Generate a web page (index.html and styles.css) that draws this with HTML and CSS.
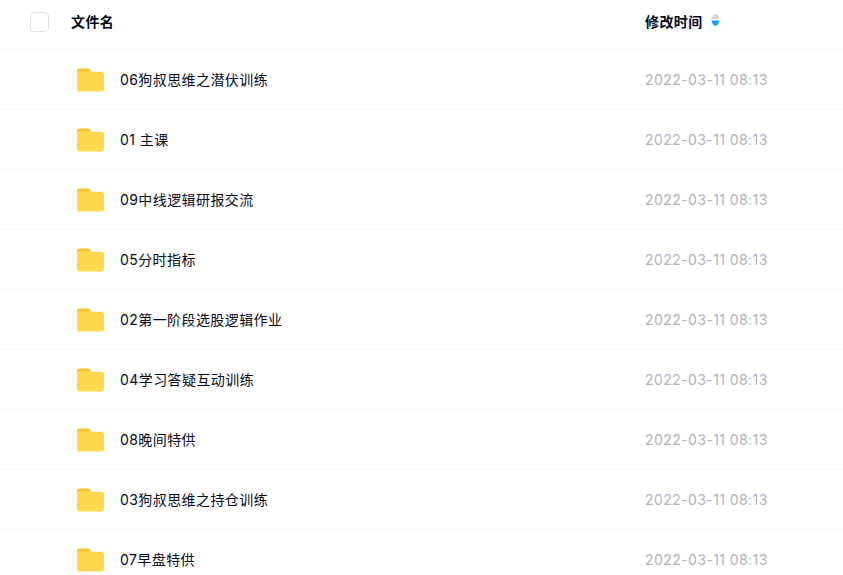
FILE: index.html
```html
<!DOCTYPE html>
<html lang="zh-CN">
<head>
    <meta charset="UTF-8">
    <title>文件列表</title>
    <link rel="stylesheet" href="styles.css">
</head>
<body>
    <svg class="defs" width="0" height="0">
        <symbol id="folder" viewBox="0 0 28 24">
            <path d="M3 0h7.500c1.500 0 2.500.6 3.500 1.600L15 3.500H3.500L0 5V3C0 1.200 1.200 0 3 0z" fill="#ffc12b"/>
            <path d="M3 3.500h22c1.800 0 3 1.200 3 3V21c0 1.800-1.200 3-3 3H3c-1.800 0-3-1.200-3-3V3.800C0 5 1.200 3.500 3 3.500z" fill="#ffd84d"/>
        </symbol>
    </svg>
    <div class="file-list">
        <div class="row head">
            <div class="check-col"><span class="checkbox"></span></div>
            <div class="name-col">文件名</div>
            <div class="time-col">修改时间
                <svg class="sort" width="9" height="14" viewBox="0 0 10 14">
                    <path d="M5 0C6.600 0 8.700 2.800 9.600 6H.4C1.300 2.800 3.400 0 5 0z" fill="#d4d7de"/>
                    <path d="M.4 7.500h9.200C8.700 11 6.600 13.500 5 13.500S1.300 11 .4 7.500z" fill="#06a7ff"/>
                </svg>
            </div>
        </div>
        <div class="row"><div class="check-col"></div><div class="name-col"><svg class="folder"><use href="#folder"/></svg><span class="name">06狗叔思维之潜伏训练</span></div><div class="time-col"><span class="time">2022-03-11 08:13</span></div></div>
        <div class="row"><div class="check-col"></div><div class="name-col"><svg class="folder"><use href="#folder"/></svg><span class="name">01 主课</span></div><div class="time-col"><span class="time">2022-03-11 08:13</span></div></div>
        <div class="row"><div class="check-col"></div><div class="name-col"><svg class="folder"><use href="#folder"/></svg><span class="name">09中线逻辑研报交流</span></div><div class="time-col"><span class="time">2022-03-11 08:13</span></div></div>
        <div class="row"><div class="check-col"></div><div class="name-col"><svg class="folder"><use href="#folder"/></svg><span class="name">05分时指标</span></div><div class="time-col"><span class="time">2022-03-11 08:13</span></div></div>
        <div class="row"><div class="check-col"></div><div class="name-col"><svg class="folder"><use href="#folder"/></svg><span class="name">02第一阶段选股逻辑作业</span></div><div class="time-col"><span class="time">2022-03-11 08:13</span></div></div>
        <div class="row"><div class="check-col"></div><div class="name-col"><svg class="folder"><use href="#folder"/></svg><span class="name">04学习答疑互动训练</span></div><div class="time-col"><span class="time">2022-03-11 08:13</span></div></div>
        <div class="row"><div class="check-col"></div><div class="name-col"><svg class="folder"><use href="#folder"/></svg><span class="name">08晚间特供</span></div><div class="time-col"><span class="time">2022-03-11 08:13</span></div></div>
        <div class="row"><div class="check-col"></div><div class="name-col"><svg class="folder"><use href="#folder"/></svg><span class="name">03狗叔思维之持仓训练</span></div><div class="time-col"><span class="time">2022-03-11 08:13</span></div></div>
        <div class="row"><div class="check-col"></div><div class="name-col"><svg class="folder"><use href="#folder"/></svg><span class="name">07早盘特供</span></div><div class="time-col"><span class="time">2022-03-11 08:13</span></div></div>
    </div>
</body>
</html>
```

FILE: styles.css
```css
html, body {
    margin: 0;
    height: 100%;
    overflow: hidden;
    background: #fff;
}

body {
    font-family: Inter, "Noto Sans CJK SC", sans-serif;
    font-size: 14px;
    letter-spacing: 0.42px;
    color: #03081a;
}

.defs {
    position: absolute;
}

.row {
    display: flex;
    align-items: center;
    height: 59px;
    border-bottom: 1px solid #f7f7f9;
}

.row.head {
    height: 43px;
    padding-bottom: 6px;
    font-weight: 700;
}

.check-col {
    width: 71px;
    flex: none;
    padding-left: 30px;
    box-sizing: border-box;
}

.checkbox {
    display: block;
    width: 17px;
    height: 18px;
    border: 1px solid #dfe1e9;
    border-radius: 4px;
}

.name-col {
    flex: 1;
    display: flex;
    align-items: center;
}

.name {
    padding-bottom: 2px;
}

.head .name-col {
    padding-bottom: 2px;
}

.folder {
    width: 27px;
    height: 24px;
    margin: 0 16px 0 6px;
    flex: none;
}

.time-col {
    width: 198px;
    flex: none;
    color: #aeb2c4;
    display: flex;
    align-items: center;
}

.head .time-col {
    color: #03081a;
    line-height: 17px;
}

.sort {
    margin-left: 8px;
    margin-top: -4px;
}
```
